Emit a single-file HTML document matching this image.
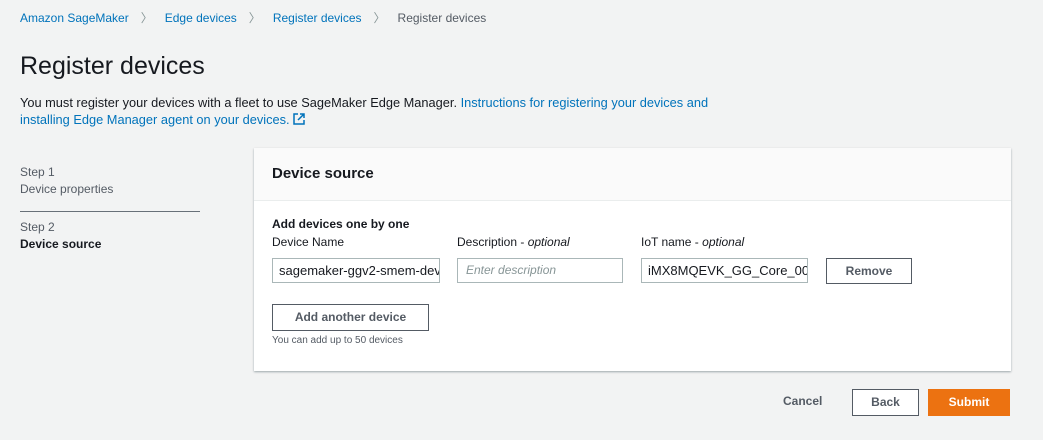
<!DOCTYPE html>
<html><head><style>
body{margin:0;width:1043px;height:440px;background:#f2f3f3;font-family:"Liberation Sans",sans-serif;color:#16191f;position:relative;overflow:hidden}
.a{position:absolute;white-space:nowrap}
.l{color:#0073bb}
.inp{position:absolute;height:25px;border:1px solid #aab7b8;background:#fff;box-sizing:border-box;font-size:13px;line-height:23px;padding-left:8px;overflow:hidden;white-space:nowrap}
.btn{position:absolute;box-sizing:border-box;border:1px solid #545b64;background:#fff;font-weight:bold;font-size:12px;color:#545b64;text-align:center}
</style></head><body>
<div class="a" style="left:20px;top:9px;font-size:12px">
<span class="l">Amazon SageMaker</span><span style="color:#879596;margin:0 12px">〉</span><span class="l">Edge devices</span><span style="color:#879596;margin:0 12px">〉</span><span class="l">Register devices</span><span style="color:#879596;margin:0 12px">〉</span><span style="color:#545b64">Register devices</span></div>
<div class="a" style="left:20px;top:52px;font-size:25px">Register devices</div>
<div class="a" style="left:20px;top:94px;font-size:12.8px;line-height:17px">You must register your devices with a fleet to use SageMaker Edge Manager. <span class="l">Instructions for registering your devices and</span><br><span class="l">installing Edge Manager agent on your devices. <svg width="12" height="12" viewBox="0 0 12 12" style="vertical-align:-1px"><path d="M5 1H1v10h10V7M7 1h4v4M11 1L5 7" fill="none" stroke="#0073bb" stroke-width="1.5"/></svg></span></div>
<div class="a" style="left:20px;top:164px;font-size:12px;line-height:17px;color:#545b64">Step 1<br>Device properties</div>
<div class="a" style="left:20px;top:211px;width:180px;border-top:1px solid #687078"></div>
<div class="a" style="left:20px;top:219px;font-size:12px;line-height:17px;color:#545b64">Step 2<br><b style="color:#16191f">Device source</b></div>
<div class="a" style="left:254px;top:148px;width:757px;height:223px;background:#fff;box-shadow:0 1px 2px rgba(0,28,36,.35)"></div>
<div class="a" style="left:254px;top:148px;width:757px;height:52px;background:#fafafa;border-bottom:1px solid #eaeded"></div>
<div class="a" style="left:272px;top:165px;font-size:15px;font-weight:bold">Device source</div>
<div class="a" style="left:272px;top:217px;font-size:12px;font-weight:bold">Add devices one by one</div>
<div class="a" style="left:272px;top:235px;font-size:12px">Device Name</div>
<div class="a" style="left:457px;top:235px;font-size:12px">Description - <i>optional</i></div>
<div class="a" style="left:641px;top:235px;font-size:12px">IoT name - <i>optional</i></div>
<div class="inp" style="left:272px;top:258px;width:168px;padding-left:6px">sagemaker-ggv2-smem-device</div>
<div class="inp" style="left:457px;top:258px;width:166px;color:#879596;font-style:italic;font-size:12px">Enter description</div>
<div class="inp" style="left:641px;top:258px;width:167px;padding-left:6px">iMX8MQEVK_GG_Core_0001</div>
<div class="btn" style="left:826px;top:258px;width:86px;height:26px;line-height:24px">Remove</div>
<div class="btn" style="left:272px;top:304px;width:157px;height:27px;line-height:25px">Add another device</div>
<div class="a" style="left:272px;top:335px;font-size:10px;color:#545b64">You can add up to 50 devices</div>
<div class="a" style="left:783px;top:394px;font-size:12px;font-weight:bold;color:#545b64">Cancel</div>
<div class="btn" style="left:852px;top:389px;width:67px;height:27px;line-height:25px">Back</div>
<div class="btn" style="left:928px;top:389px;width:82px;height:27px;line-height:25px;background:#ec7211;border-color:#ec7211;color:#fff">Submit</div>
</body></html>
